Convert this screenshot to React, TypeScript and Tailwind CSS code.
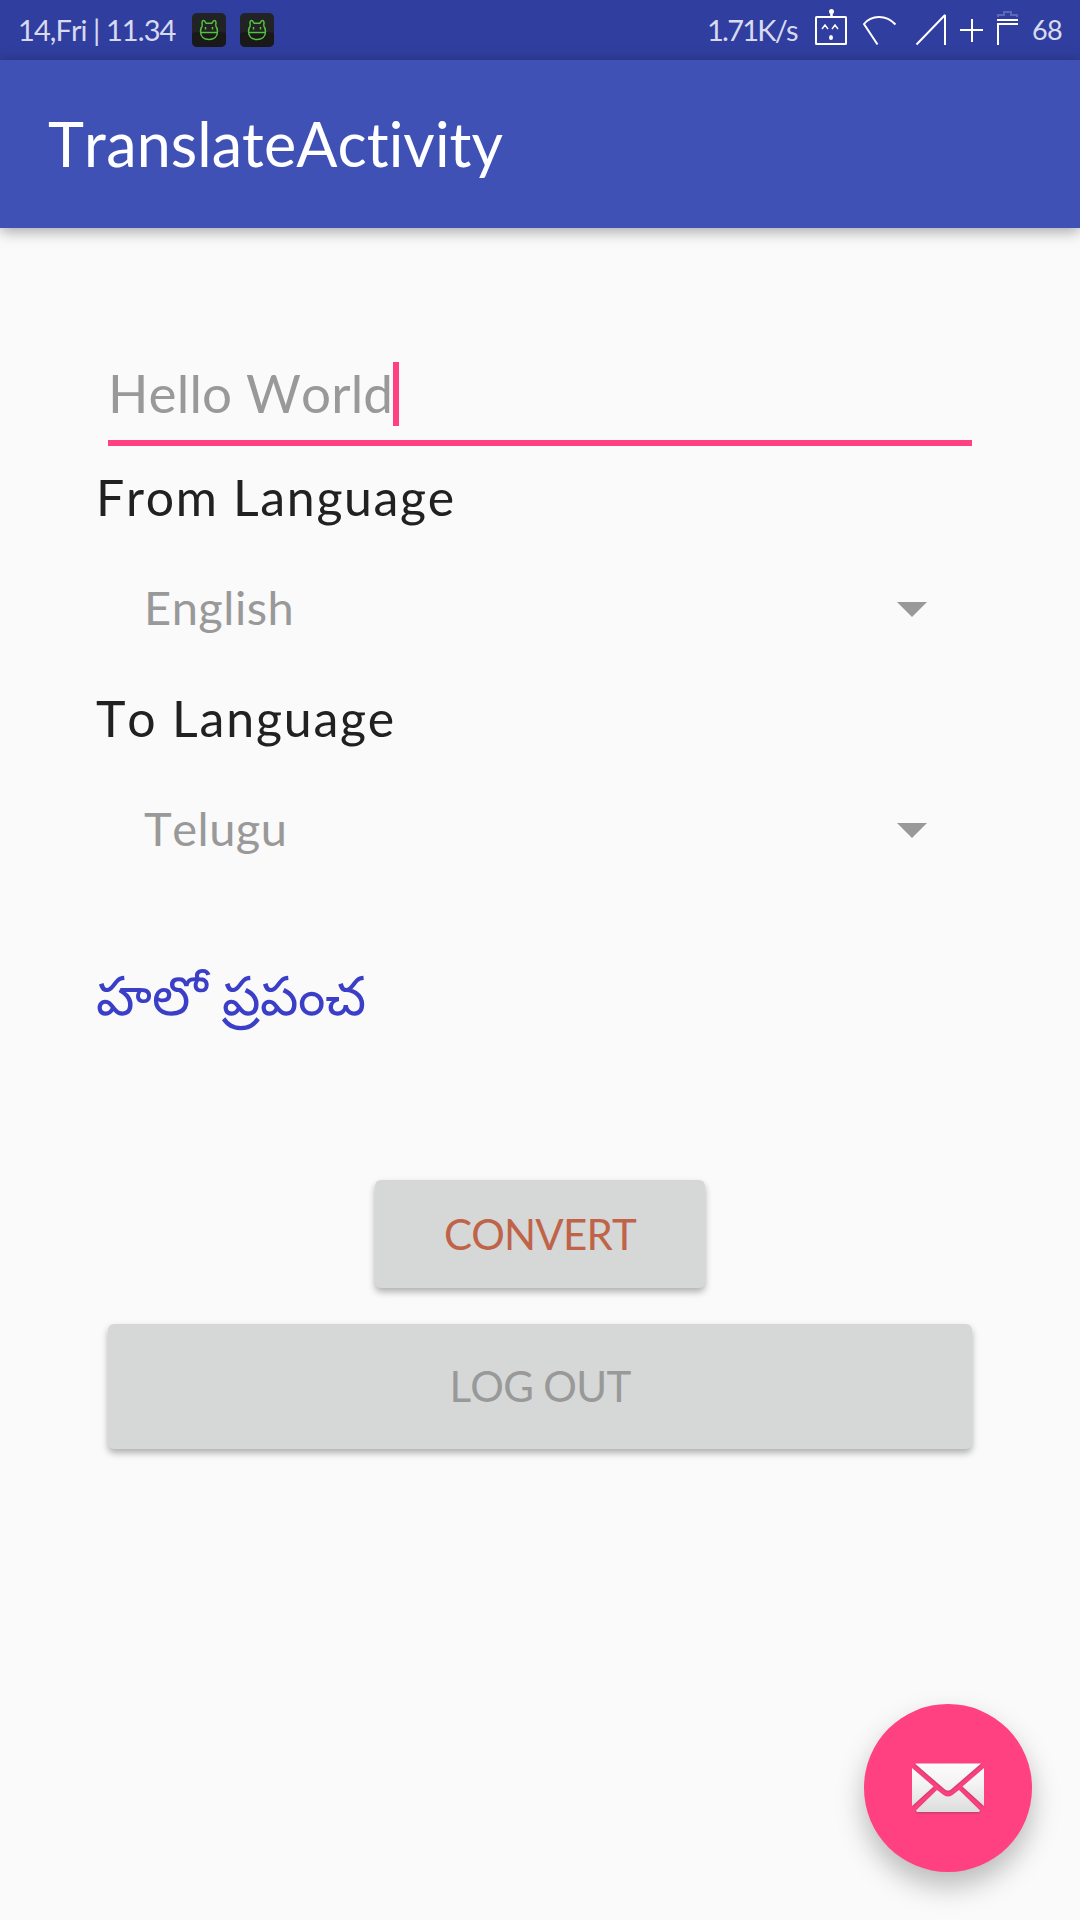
function CatBadge() {
  return (
    <svg width="34" height="34" viewBox="0 0 34 34" fill="none">
      <rect width="34" height="34" rx="5" fill="#222324" />
      <path d="M0 20Q17 16 34 20V29a5 5 0 0 1-5 5H5a5 5 0 0 1-5-5Z" fill="#19191a" />
      <g stroke="#54c23e" strokeWidth="1.5">
        <path d="M10.5 12.5C9.5 10 10 7.5 11.5 7.5C13 7.5 13.5 9.5 14.2 10.2H19.8C20.5 9.5 21 7.5 22.5 7.5C24 7.5 24.500 10 23.500 12.5" />
        <path d="M10.5 12.5C8.8 14.5 8.5 16.5 8.5 18.5C8.5 23.5 12 26.5 17 26.5C22 26.5 25.5 23.5 25.5 18.5C25.5 16.5 25.2 14.5 23.5 12.5" />
        <path d="M8.5 19.5H25.5M13.500 14V16.5M20.500 14V16.5" />
      </g>
    </svg>
  );
}

function StatusBar() {
  return (
    <div className="flex h-[60px] items-start justify-between bg-[#303f9f] text-[29px] leading-[60px] text-[#d8daf0]">
      <div className="flex h-[60px] items-center pl-[18px]">
        <span className="w-[174px] tracking-[-0.92px]">14,Fri | 11.34</span>
        <div className="flex gap-[14px]">
          <CatBadge />
          <CatBadge />
        </div>
      </div>
      <div className="flex h-[60px] items-start">
        <span className="w-[107px] tracking-[-1.76px]">1.71K/s</span>
        <svg width="34" height="60" viewBox="0 0 34 60" fill="none" stroke="#fff" strokeWidth="2">
          <rect x="2" y="17" width="30" height="27" rx="0.5" />
          <path d="M17.5 12V17" strokeWidth="2.5" />
          <circle cx="17.5" cy="11.5" r="2.5" fill="#fff" stroke="none" />
          <path d="M8 29L11 25L14 29M18 29L21 25L24 29" strokeWidth="1.4" />
          <ellipse cx="17" cy="37.5" rx="2" ry="2.5" fill="#fff" stroke="none" />
        </svg>
        <svg className="ml-[14px]" width="36" height="60" viewBox="0 0 36 60" fill="none" stroke="#fff" strokeWidth="2">
          <path d="M15.5 44.5L2 24C9 15 24 14 33.5 24.5" />
        </svg>
        <svg className="ml-[16px]" width="34" height="60" viewBox="0 0 34 60" fill="none" stroke="#fff" strokeWidth="2">
          <path d="M2.5 44.5L31 15V45" strokeMiterlimit="2" />
        </svg>
        <svg className="ml-[12px]" width="24" height="60" viewBox="0 0 24 60" fill="none" stroke="#fff" strokeWidth="2">
          <path d="M0 30H23M12 19V42" />
        </svg>
        <svg className="ml-[13px]" width="21" height="60" viewBox="0 0 21 60" fill="none" stroke="#fff" strokeWidth="2">
          <path d="M1 17V15H7V12H14V15H20V17" stroke="#5c68b5" />
          <path d="M0 20H21M21 24H1V45" />
        </svg>
        <span className="ml-[14px] w-[48px] text-[27px] leading-[59px] tracking-[-0.66px]">68</span>
      </div>
    </div>
  );
}

function Spinner({ value }: { value: string }) {
  return (
    <div className="flex h-[60px] items-center justify-between pr-[56px] pl-[47px] text-[47px] leading-[60px] text-[#999]">
      <span className="tracking-[0.5px]">{value}</span>
      <svg className="mt-[5px]" width="30" height="15" viewBox="0 0 30 15">
        <path d="M0 0H30L15 15Z" fill="#999" />
      </svg>
    </div>
  );
}

function Envelope() {
  return (
    <svg className="mt-[2px]" width="72" height="52" viewBox="0 0 72 52">
      <defs>
        <linearGradient id="paper" gradientUnits="userSpaceOnUse" x1="0" y1="0" x2="0" y2="50">
          <stop offset="0" stopColor="#fcfcfc" />
          <stop offset="0.4" stopColor="#f4f4f4" />
          <stop offset="1" stopColor="#dcdcdc" />
        </linearGradient>
        <filter id="edge" x="-5%" y="-5%" width="110%" height="115%">
          <feDropShadow dx="0" dy="0.6" stdDeviation="0.8" floodColor="#5a3040" floodOpacity="0.6" />
        </filter>
      </defs>
      <g fill="url(#paper)" filter="url(#edge)">
        <path d="M4 0.5H69L39.5 26Q36 29 32.5 26L3.500 1Z" />
        <path d="M0 5L21.500 23.500L0 43Z" />
        <path d="M72 5L50.500 23.500L72 43Z" />
        <path d="M25 27L31.500 32Q36 35 40.500 32L47 27L68 47.500L67 49H5L4 47.500Z" />
      </g>
    </svg>
  );
}

export default function App() {
  return (
    <div className="relative flex h-[1920px] w-[1080px] flex-col overflow-hidden bg-[#fafafa] font-['Lato',sans-serif] [font-kerning:none]">
      <StatusBar />
      <header className="relative z-10 flex h-[168px] items-center bg-[#3f51b5] pl-[48px] shadow-[0_3px_14px_rgba(0,0,0,0.36)]">
        <h1 className="text-[61px] leading-[72px] tracking-[0.05px] text-white">TranslateActivity</h1>
      </header>
      <main className="flex flex-col px-[97px] pt-[134px]">
        <div className="mx-[11px] flex h-[84px] items-start border-b-[6px] border-[#ff4081]">
          <span className="w-[285px] text-[53px] leading-[62px] tracking-[0.15px] whitespace-nowrap text-[#999]">Hello World</span>
          <span className="h-[64px] w-[6px] bg-[#ff4081]" />
        </div>
        <p className="-ml-px mt-[21px] h-[61px] text-[50px] leading-[61px] tracking-[1.65px] text-[#212121]">From Language</p>
        <div className="mt-[49px]">
          <Spinner value="English" />
        </div>
        <p className="-ml-px mt-[51px] h-[61px] text-[50px] leading-[61px] tracking-[1.8px] text-[#212121]">To Language</p>
        <div className="mt-[49px]">
          <Spinner value="Telugu" />
        </div>
        <p className="-ml-px mt-[97px] h-[81px] text-[54.1px] leading-[80px] text-[#3b3fc8] [font-kerning:auto]">హలో ప్రపంచ</p>
        <button className="mt-[144px] h-[108px] w-[330px] self-center rounded-[6px] bg-[#d6d7d7] text-[42px] tracking-[-0.8px] text-[#bf6448] shadow-[0_4px_7px_rgba(0,0,0,0.3)]">
          CONVERT
        </button>
        <button className="mx-[11px] mt-[36px] h-[125px] rounded-[6px] bg-[#d6d7d7] pb-px text-[42px] tracking-[-0.7px] text-[#999] shadow-[0_4px_7px_rgba(0,0,0,0.3)]">
          LOG OUT
        </button>
      </main>
      <button className="absolute right-[48px] bottom-[48px] flex h-[168px] w-[168px] items-center justify-center rounded-full bg-[#ff4081] shadow-[0_14px_28px_rgba(0,0,0,0.26)]">
        <Envelope />
      </button>
    </div>
  );
}
